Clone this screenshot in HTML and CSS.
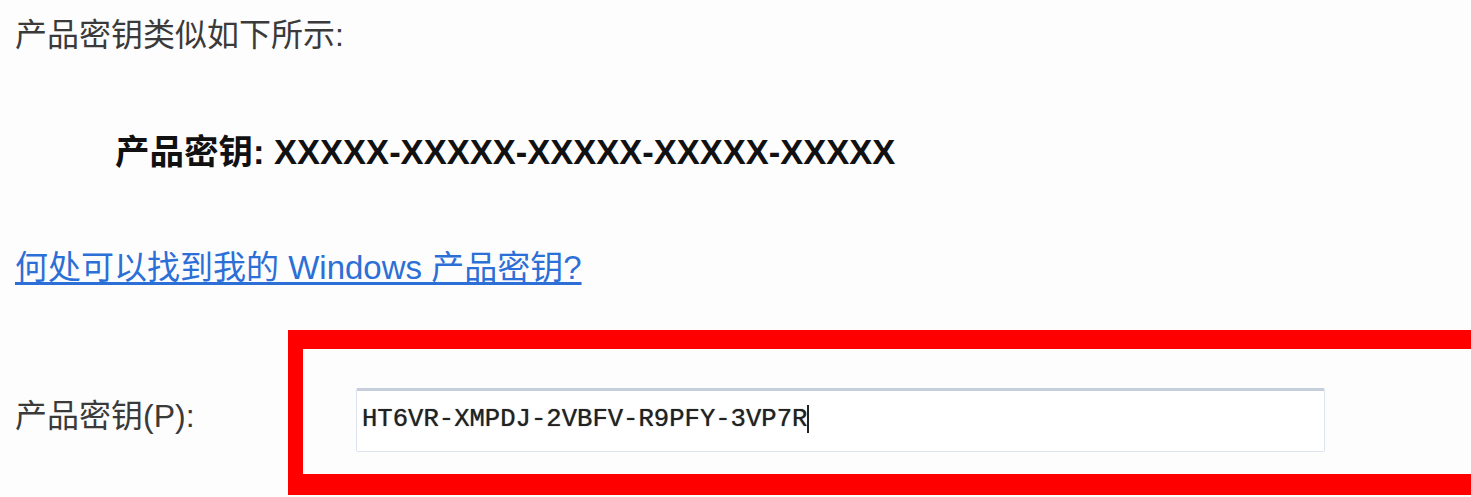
FILE: index.html
```html
<!DOCTYPE html>
<html lang="zh-CN">
<head>
  <meta charset="UTF-8" />
  <title>产品密钥</title>
  <link rel="stylesheet" href="styles.css">
</head>
<body>
  <p class="intro">产品密钥类似如下所示:</p>

  <p class="sample">产品密钥: XXXXX-XXXXX-XXXXX-XXXXX-XXXXX</p>

  <p class="help"><a href="#">何处可以找到我的 Windows 产品密钥?</a></p>

  <div class="key-row">
    <label for="keyInput">产品密钥(P):</label>
    <div class="highlight">
      <div class="key-box">
        <span class="key-text">HT6VR-XMPDJ-2VBFV-R9PFY-3VP7R</span><span class="caret"></span>
      </div>
    </div>
  </div>
</body>
</html>
```

FILE: styles.css
```css
:root {
  --text: #3a3a3a;
  --link: #2c6fd6;
  --mark: #ff0000;
}

body {
  margin: 0;
  padding: 0 15px;
  background: #fdfdfd;
  color: var(--text);
  font-family: "Liberation Sans", "Noto Sans CJK SC", sans-serif;
  overflow: hidden;
}

p {
  margin: 0;
}

.intro {
  margin-top: 15px;
  font-size: 32px;
  line-height: 40px;
}

.sample {
  margin-top: 75px;
  padding-left: 100px;
  font-size: 34.5px;
  line-height: 44px;
  font-weight: bold;
  color: #111;
}

.help {
  margin-top: 74px;
  font-size: 33px;
  line-height: 40px;
}

.help a {
  color: var(--link);
  text-decoration: underline;
  text-underline-offset: 3px;
}

.key-row {
  display: flex;
  align-items: center;
  margin-top: 42px;
  margin-right: -40px;
}

.key-row label {
  width: 273px;
  font-size: 32px;
}

.highlight {
  flex: 1;
  border: 15px solid var(--mark);
  border-top-width: 19px;
  border-bottom-width: 21px;
  padding: 39px 0 22px 53px;
}

.key-box {
  width: 969px;
  height: 64px;
  box-sizing: border-box;
  border: 1px solid #dde4ee;
  border-top: 3px solid #c6cedb;
  border-radius: 2px;
  background: #fff;
  display: flex;
  align-items: center;
  padding: 0 0 4px 5px;
}

.key-text {
  font-family: "Liberation Mono", monospace;
  font-size: 25.6px;
  color: #222;
  text-shadow: 0 0 1px #555;
}

.caret {
  width: 2px;
  height: 28px;
  background: #222;
}
```
